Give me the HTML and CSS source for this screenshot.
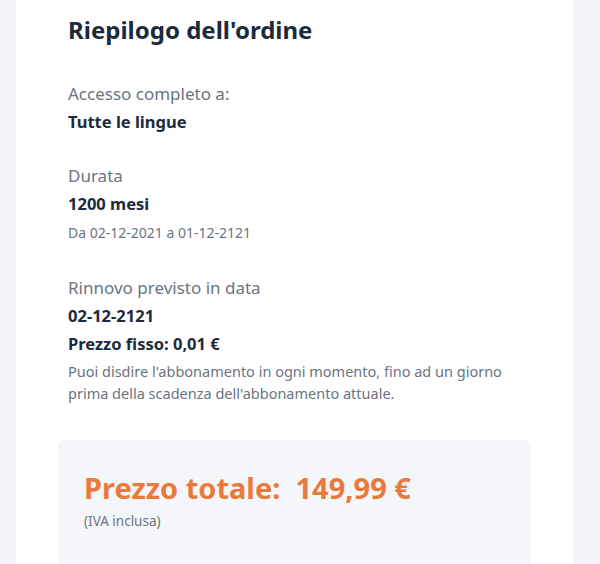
FILE: index.html
```
<!DOCTYPE html>
<html lang="it">
<head>
<meta charset="utf-8">
<link rel="stylesheet" href="styles.css">
</head>
<body>
<div class="card">
  <h1 class="title">Riepilogo dell'ordine</h1>
  <section class="group">
    <div class="label">Accesso completo a:</div>
    <div class="value">Tutte le lingue</div>
  </section>
  <section class="group">
    <div class="label">Durata</div>
    <div class="value">1200 mesi</div>
    <div class="small">Da 02-12-2021 a 01-12-2121</div>
  </section>
  <section class="group">
    <div class="label">Rinnovo previsto in data</div>
    <div class="value">02-12-2121</div>
    <div class="value">Prezzo fisso: 0,01 €</div>
    <p class="note">Puoi disdire l'abbonamento in ogni momento, fino ad un giorno prima della scadenza dell'abbonamento attuale.</p>
  </section>
  <div class="total">
    <div class="total-price">Prezzo totale:&nbsp; 149,99 €</div>
    <div class="vat">(IVA inclusa)</div>
  </div>
</div>
</body>
</html>
```
FILE: styles.css
```
html, body {
  margin: 0;
  padding: 0;
}
body {
  background: #f3f5f8;
  font-family: "Noto Sans", "DejaVu Sans", sans-serif;
  color: #1b2b3b;
  height: 564px;
  overflow: hidden;
}
.card {
  margin-left: 16px;
  width: 557px;
  height: 564px;
  background: #ffffff;
  padding: 14px 0 0 0;
  box-sizing: border-box;
}
.title {
  margin: 0 0 0 52px;
  font-size: 24px;
  line-height: 32px;
  font-weight: 700;
  color: #1b2b3b;
}
.group {
  margin: 34px 0 0 52px;
}
.group + .group {
  margin-top: 26px;
}
.label {
  font-size: 17px;
  line-height: 28px;
  color: #6b7480;
}
.value {
  font-size: 16.5px;
  line-height: 28px;
  font-weight: 700;
  color: #1b2b3b;
}
.small {
  font-size: 14px;
  line-height: 30px;
  color: #6b7480;
}
.note {
  margin: 2px 0 0 0;
  width: 460px;
  font-size: 14.5px;
  line-height: 22px;
  color: #6b7480;
}
.total {
  margin: 36px 0 0 42px;
  width: 473px;
  height: 140px;
  background: #f4f6f9;
  border-radius: 7px;
  padding: 28px 26px 0 26px;
  box-sizing: border-box;
}
.total-price {
  font-size: 29px;
  line-height: 40px;
  font-weight: 700;
  color: #ea7a3c;
}
.vat {
  margin-top: 4px;
  font-size: 13.5px;
  line-height: 18px;
  color: #6b7480;
}
```
